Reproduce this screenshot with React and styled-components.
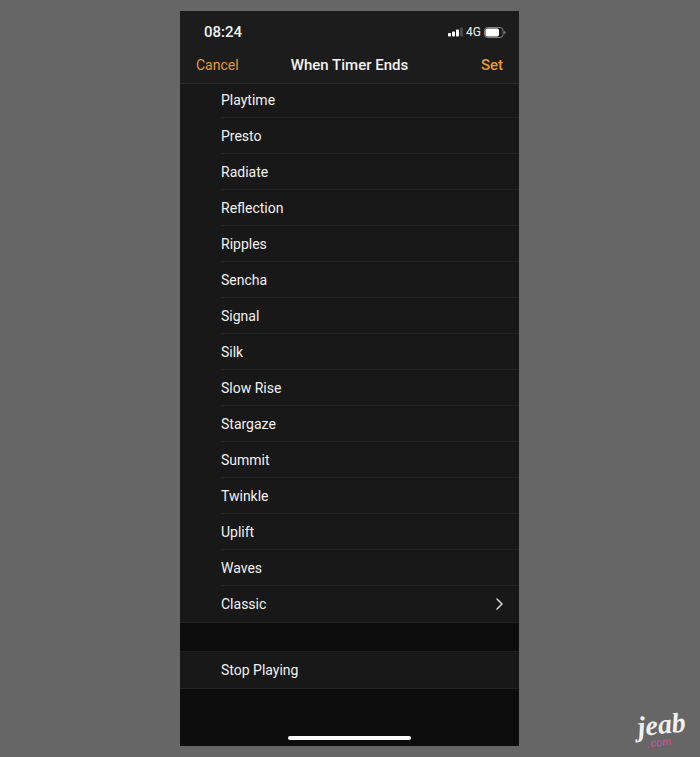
import React, { useState } from "react";
import styled, { createGlobalStyle } from "styled-components";

const GlobalStyle = createGlobalStyle`
  * {
    box-sizing: border-box;
  }

  body {
    margin: 0;
    background-color: #666666;
    font-family: Roboto, "Liberation Sans", sans-serif;
  }
`;

const Page = styled.div`
  display: grid;
  grid-template-columns: 180fr 339fr 181fr;
  min-height: 100vh;
  padding: 11px 0;
`;

const Phone = styled.main`
  grid-column: 2;
  display: flex;
  flex-direction: column;
  background-color: #0d0d0d;
  color: #f2f2f2;
  overflow: hidden;
`;

const Header = styled.header`
  position: relative;
  z-index: 1;
  background-color: #1c1c1c;
  border-bottom: 1px solid #2b2b2b;
`;

const StatusBar = styled.div`
  display: flex;
  align-items: center;
  justify-content: space-between;
  height: 36px;
  padding: 6px 13px 0 24px;
`;

const Clock = styled.time`
  font-size: 15px;
  font-weight: 500;
`;

const StatusIcons = styled.div`
  display: flex;
  align-items: center;
  gap: 3px;
`;

const Network = styled.span`
  font-size: 12px;
  font-weight: 400;
`;

const NavBar = styled.nav`
  display: grid;
  grid-template-columns: 1fr auto 1fr;
  align-items: center;
  height: 36px;
  padding: 0 16px;
`;

const Title = styled.h1`
  margin: 0;
  font-size: 15px;
  font-weight: 500;
`;

const NavButton = styled.button`
  justify-self: ${(props) => (props.$primary ? "end" : "start")};
  padding: 0;
  border: none;
  background: none;
  color: #e59a36;
  font-family: inherit;
  font-size: ${(props) => (props.$primary ? "15px" : "14px")};
  font-weight: ${(props) => (props.$primary ? 500 : 400)};
  cursor: pointer;
`;

const SoundList = styled.ul`
  list-style: none;
  margin: -2px 0 28px;
  padding: 0;
  background-color: #181818;
  border-bottom: 1px solid #242424;
`;

const StopSection = styled.section`
  background-color: #181818;
  border-top: 1px solid #1f1f1f;
  border-bottom: 1px solid #242424;
`;

const SoundItem = styled.li`
  padding-left: 41px;
`;

const SoundButton = styled.button`
  display: flex;
  align-items: center;
  justify-content: space-between;
  width: 100%;
  height: 36px;
  padding: 0 16px 0 0;
  border: none;
  border-bottom: 1px solid ${(props) => (props.$last ? "transparent" : "#242424")};
  background: none;
  color: inherit;
  font-family: inherit;
  font-size: 14px;
  text-align: left;
  cursor: pointer;
`;

const StopButton = styled(SoundButton)`
  padding-left: 41px;
`;

const HomeBar = styled.div`
  width: 36%;
  height: 4px;
  margin: auto auto 6px;
  border-radius: 2px;
  background-color: #ffffff;
`;

const Watermark = styled.div`
  grid-column: 3;
  place-self: end;
  display: flex;
  flex-direction: column;
  padding-right: 14px;
  font-family: "Liberation Serif", serif;
  font-style: italic;
  transform: rotate(-6deg);
`;

const WatermarkName = styled.span`
  color: #f0f0f0;
  font-size: 28px;
  font-weight: 700;
  line-height: 24px;
`;

const WatermarkDomain = styled.span`
  padding-left: 8px;
  color: #cf5593;
  font-family: "Liberation Sans", sans-serif;
  font-size: 11px;
  line-height: 10px;
`;

const sounds = [
  "Playtime",
  "Presto",
  "Radiate",
  "Reflection",
  "Ripples",
  "Sencha",
  "Signal",
  "Silk",
  "Slow Rise",
  "Stargaze",
  "Summit",
  "Twinkle",
  "Uplift",
  "Waves",
  "Classic",
];

function SignalIcon() {
  return (
    <svg width="15" height="10" viewBox="0 0 15 10" fill="#fff">
      <rect x="0" y="6" width="3" height="3.5" rx="0.8" />
      <rect x="4" y="4.5" width="3" height="5" rx="0.8" />
      <rect x="8" y="2.5" width="3" height="7" rx="0.8" />
      <rect x="12" y="0.5" width="3" height="9" rx="0.8" fill="#4a4a4a" />
    </svg>
  );
}

function BatteryIcon() {
  return (
    <svg width="22" height="11" viewBox="0 0 22 11">
      <rect x="0.5" y="0.5" width="18.5" height="10" rx="3" fill="none" stroke="#858585" />
      <rect x="1.5" y="1.5" width="13.5" height="8" rx="1.8" fill="#fff" />
      <path d="M20.2 3.8 Q21.6 4.4 21.6 5.5 Q21.6 6.6 20.2 7.2 Z" fill="#858585" />
    </svg>
  );
}

function ChevronIcon() {
  return (
    <svg width="7" height="12" viewBox="0 0 7 12" fill="none">
      <path d="M1 1 L6 6 L1 11" stroke="#d8d8d8" strokeWidth="1.5" strokeLinecap="round" />
    </svg>
  );
}

function App() {
  const [selected, setSelected] = useState("");

  return (
    <>
      <GlobalStyle />
      <Page>
        <Phone>
          <Header>
            <StatusBar>
              <Clock>08:24</Clock>
              <StatusIcons>
                <SignalIcon />
                <Network>4G</Network>
                <BatteryIcon />
              </StatusIcons>
            </StatusBar>
            <NavBar>
              <NavButton type="button">Cancel</NavButton>
              <Title>When Timer Ends</Title>
              <NavButton type="button" $primary>
                Set
              </NavButton>
            </NavBar>
          </Header>
          <SoundList>
            {sounds.map((sound, index) => (
              <SoundItem key={sound}>
                <SoundButton
                  type="button"
                  $last={index === sounds.length - 1}
                  aria-pressed={selected === sound}
                  onClick={() => setSelected(sound)}
                >
                  {sound}
                  {sound === "Classic" && <ChevronIcon />}
                </SoundButton>
              </SoundItem>
            ))}
          </SoundList>
          <StopSection>
            <StopButton
              type="button"
              $last
              aria-pressed={selected === "Stop Playing"}
              onClick={() => setSelected("Stop Playing")}
            >
              Stop Playing
            </StopButton>
          </StopSection>
          <HomeBar />
        </Phone>
        <Watermark>
          <WatermarkName>jeab</WatermarkName>
          <WatermarkDomain>.com</WatermarkDomain>
        </Watermark>
      </Page>
    </>
  );
}

export default App;
